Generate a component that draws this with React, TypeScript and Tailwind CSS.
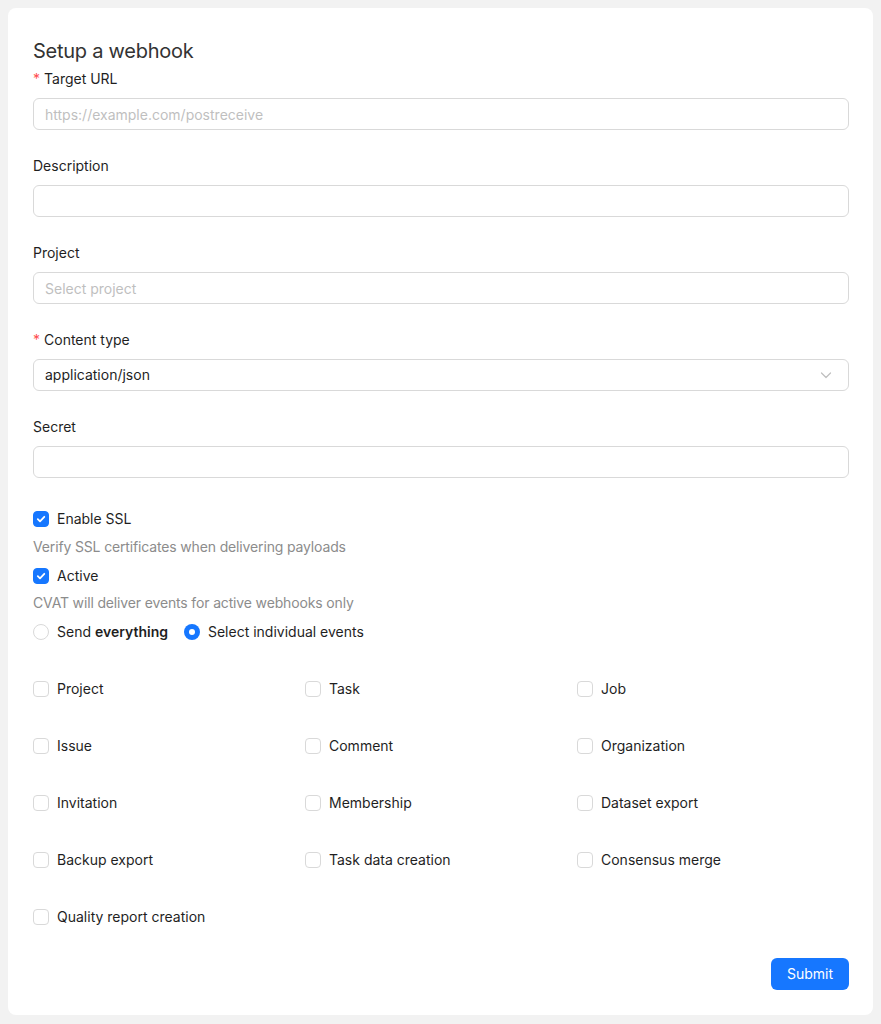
import { useState } from 'react'

const EVENTS = [
  'Project', 'Task', 'Job',
  'Issue', 'Comment', 'Organization',
  'Invitation', 'Membership', 'Dataset export',
  'Backup export', 'Task data creation', 'Consensus merge',
  'Quality report creation',
]

function Check({ checked, onChange, label }: { checked: boolean; onChange: () => void; label: React.ReactNode }) {
  return (
    <label className="flex items-center gap-2 h-8 cursor-pointer select-none">
      <span
        onClick={onChange}
        className={
          checked
            ? 'w-4 h-4 rounded-[4px] bg-[#1677ff] border border-[#1677ff] flex items-center justify-center'
            : 'w-4 h-4 rounded-[4px] bg-white border border-[#d9d9d9]'
        }
      >
        {checked && (
          <svg width="10" height="10" viewBox="0 0 10 10" fill="none">
            <path d="M1.8 5.2 4 7.3 8.3 2.8" stroke="white" strokeWidth="1.8" strokeLinecap="round" strokeLinejoin="round" />
          </svg>
        )}
      </span>
      <span className="text-sm text-[#1f1f1f]">{label}</span>
    </label>
  )
}

function Radio({ checked, onChange, children }: { checked: boolean; onChange: () => void; children: React.ReactNode }) {
  return (
    <label className="flex items-center gap-2 h-8 cursor-pointer select-none" onClick={onChange}>
      <span
        className={
          checked
            ? 'w-4 h-4 rounded-full bg-[#1677ff] flex items-center justify-center'
            : 'w-4 h-4 rounded-full bg-white border border-[#d9d9d9]'
        }
      >
        {checked && <span className="w-[6px] h-[6px] rounded-full bg-white" />}
      </span>
      <span className="text-sm text-[#1f1f1f]">{children}</span>
    </label>
  )
}

function Field({ label, required, children }: { label: string; required?: boolean; children: React.ReactNode }) {
  return (
    <div className="mb-[25px]">
      <div className="pb-2 leading-[22px] text-sm text-[#1f1f1f]">
        {required && <span className="text-[#ff4d4f] mr-1">*</span>}
        {label}
      </div>
      {children}
    </div>
  )
}

const inputCls =
  'w-full h-8 px-[11px] rounded-md border border-[#d9d9d9] bg-white text-sm text-[#1f1f1f] placeholder:text-[#bfbfbf] outline-none'

export default function App() {
  const [ssl, setSsl] = useState(true)
  const [active, setActive] = useState(true)
  const [mode, setMode] = useState<'all' | 'select'>('select')
  const [events, setEvents] = useState<string[]>([])

  const toggle = (e: string) =>
    setEvents((prev) => (prev.includes(e) ? prev.filter((x) => x !== e) : [...prev, e]))

  return (
    <div className="min-h-screen bg-[#f2f2f2] p-2" style={{ fontFamily: 'Inter, "Noto Sans", sans-serif' }}>
      <div className="bg-white rounded-lg pl-[25px] pr-6 pt-6 pb-[25px]">
        <h4 className="mt-[5px] text-[20px] leading-[28px] tracking-[-0.25px] text-[#333] font-normal">Setup a webhook</h4>
        <div className="mt-[3px]">
          <Field label="Target URL" required>
            <input className={inputCls} placeholder="https://example.com/postreceive" />
          </Field>
          <Field label="Description">
            <input className={inputCls} />
          </Field>
          <Field label="Project">
            <input className={inputCls} placeholder="Select project" />
          </Field>
          <Field label="Content type" required>
            <div className={inputCls + ' flex items-center justify-between'}>
              <span>application/json</span>
              <svg width="12" height="12" viewBox="0 0 12 12" fill="none" className="mr-[5px]">
                <path d="M1.5 4 6 8.5 10.5 4" stroke="#bfbfbf" strokeWidth="1.2" strokeLinecap="round" strokeLinejoin="round" />
              </svg>
            </div>
          </Field>
          <Field label="Secret">
            <input className={inputCls} />
          </Field>
        </div>

        <div className="mt-[3px]">
          <Check checked={ssl} onChange={() => setSsl(!ssl)} label="Enable SSL" />
          <div className="mt-[1px] text-sm leading-[22px] tracking-[-0.15px] text-[#8c8c8c]">
            Verify SSL certificates when delivering payloads
          </div>
          <div className="mt-[2px]">
            <Check checked={active} onChange={() => setActive(!active)} label="Active" />
          </div>
          <div className="text-sm leading-[22px] tracking-[-0.15px] text-[#8c8c8c]">
            CVAT will deliver events for active webhooks only
          </div>
          <div className="mt-[2px] flex items-center gap-4">
            <Radio checked={mode === 'all'} onChange={() => setMode('all')}>
              Send <b className="font-semibold">everything</b>
            </Radio>
            <Radio checked={mode === 'select'} onChange={() => setMode('select')}>
              Select individual events
            </Radio>
          </div>
        </div>

        <div className="mt-[25px] grid grid-cols-3 gap-y-[25px]">
          {EVENTS.map((e) => (
            <Check key={e} checked={events.includes(e)} onChange={() => toggle(e)} label={e} />
          ))}
        </div>

        <div className="mt-[25px] flex justify-end">
          <button className="h-8 px-4 rounded-md bg-[#1677ff] text-white text-sm">Submit</button>
        </div>
      </div>
    </div>
  )
}
